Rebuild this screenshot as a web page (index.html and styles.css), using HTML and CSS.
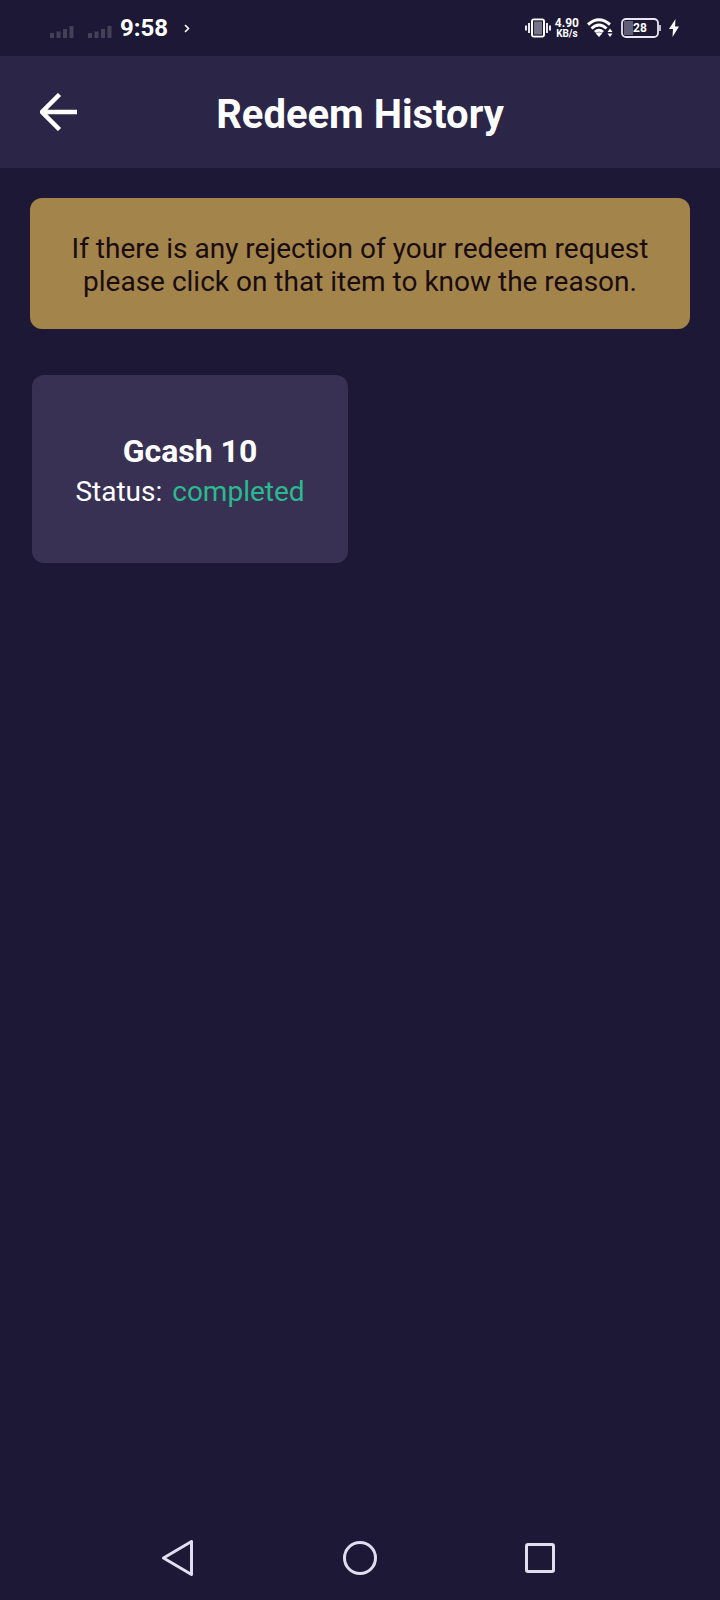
FILE: index.html
```html
<!DOCTYPE html>
<html lang="en">
<head>
<meta charset="utf-8">
<meta name="viewport" content="width=device-width, initial-scale=1">
<title>Redeem History</title>
<link rel="stylesheet" href="styles.css">
</head>
<body>
<div class="screen">
  <div class="status-bar">
    <div class="status-left">
      <svg class="signal" width="24" height="12" viewBox="0 0 24 12" aria-hidden="true"><path d="M0 7h4v5H0zM6.500 5.500h4V12h-4zM13 3h4v9h-4zM19.500 0h4v12h-4z"/></svg>
      <svg class="signal" width="24" height="12" viewBox="0 0 24 12" aria-hidden="true"><path d="M0 7h4v5H0zM6.500 5.500h4V12h-4zM13 3h4v9h-4zM19.500 0h4v12h-4z"/></svg>
      <span class="clock">9:58</span>
      <svg class="chevron" width="6" height="9" viewBox="0 0 6 9" aria-hidden="true"><path d="M1 1l3.500 3.500L1 8" fill="none" stroke="#fff" stroke-width="1.600"/></svg>
    </div>
    <div class="status-right">
      <svg width="26" height="20" viewBox="0 0 26 20" aria-hidden="true">
        <rect x="7" y="1.500" width="12" height="17" rx="2" fill="#77738a" stroke="#fff" stroke-width="2"/>
        <rect x="8.500" y="3" width="9" height="14" fill="none" stroke="#1c1835" stroke-width="1"/>
        <path d="M1 7.500v5M4 5v10M22 5v10M25 7.500v5" stroke="#fff" stroke-width="1.800"/>
      </svg>
      <span class="speed"><b class="rate">4.90</b><b class="unit">KB/s</b></span>
      <svg class="wifi" width="26" height="20" viewBox="0 0 26 20" aria-hidden="true">
        <path d="M1 6.500q11-9.500 22 0M4.500 10.500q7.500-7 15 0M8 14q4-3.600 8 0" fill="none" stroke="#fff" stroke-width="3"/>
        <path d="M8.800 15.500q3.200-2.400 6.400 0L12 19z" fill="#fff"/>
        <path d="M20.500 14l2.500-3.500 2.500 3.500zM20.500 15.500l2.500 3.500 2.500-3.500z" fill="#fff"/>
      </svg>
      <svg class="battery" width="40" height="20" viewBox="0 0 40 20" role="img" aria-label="Battery 28 percent">
        <rect x="3" y="3" width="9" height="14" fill="#625e76"/>
        <rect x="1" y="1" width="36" height="18" rx="4" fill="none" stroke="#e8e6f2" stroke-width="1.800"/>
        <path d="M39 7v6" stroke="#e8e6f2" stroke-width="1.600"/>
        <text class="charge" x="19" y="14" text-anchor="middle">28</text>
      </svg>
      <svg width="10" height="18" viewBox="0 0 10 18" aria-hidden="true"><path d="M6.500 0L0 10h4L3.500 18 10 7.500H6z" fill="#fff"/></svg>
    </div>
  </div>
  <header class="app-bar">
    <button class="back" type="button" aria-label="Back">
      <svg width="38" height="38" viewBox="0 0 38 38" aria-hidden="true"><path d="M19.500 1.500L2 19l17.500 17.500M2 19h35" fill="none" stroke="#fff" stroke-width="4.500"/></svg>
    </button>
    <h1 class="title">Redeem History</h1>
  </header>
  <main class="content">
    <p class="notice">If there is any rejection of your redeem request please click on that item to know the reason.</p>
    <div class="items">
      <button class="item" type="button">
        <span class="item-name">Gcash 10</span>
        <span class="item-status"><span>Status:</span><span class="completed">completed</span></span>
      </button>
    </div>
  </main>
  <nav class="nav-bar" aria-label="System navigation">
    <button class="nav-button" type="button" aria-label="Back"><svg width="36" height="36" viewBox="0 0 36 36" aria-hidden="true"><path d="M1.500 18L29.500 1.500v33z"/></svg></button>
    <button class="nav-button" type="button" aria-label="Home"><svg width="36" height="36" viewBox="0 0 36 36" aria-hidden="true"><circle cx="18" cy="18" r="15.500"/></svg></button>
    <button class="nav-button" type="button" aria-label="Recent apps"><svg width="36" height="36" viewBox="0 0 36 36" aria-hidden="true"><rect x="4.500" y="4.500" width="27" height="27" rx="1.500"/></svg></button>
  </nav>
</div>
</body>
</html>
```
FILE: styles.css
```css
* { box-sizing: border-box; }

body {
  margin: 0;
  background: #1c1835;
  color: #fff;
  font-family: Roboto, "Liberation Sans", sans-serif;
}

button {
  padding: 0;
  border: 0;
  background: none;
  color: inherit;
  font: inherit;
}

svg { display: block; flex: none; }

.screen {
  display: flex;
  flex-direction: column;
  min-height: 100vh;
}

.status-bar {
  display: flex;
  justify-content: space-between;
  align-items: center;
  height: 56px;
  padding: 0 41px 0 50px;
}

.status-left,
.status-right { display: flex; align-items: center; }

.status-right { gap: 8px; }

.signal {
  margin: 8px 14px 0 0;
  fill: #454059;
}

.signal + .clock { margin-left: -6px; }

.clock {
  font-size: 24px;
  font-weight: 700;
  line-height: 28px;
}

.chevron { margin-left: 16px; }

.speed {
  display: flex;
  flex-direction: column;
  align-items: center;
  margin-left: -4px;
}

.rate { font-size: 12px; line-height: 11px; }

.unit { font-size: 10px; line-height: 10px; }

.charge {
  fill: #fff;
  font-size: 12px;
  font-weight: 700;
}

.app-bar {
  display: grid;
  grid-template-columns: 78px 1fr 78px;
  align-items: center;
  height: 112px;
  background: #2b2548;
}

.back { justify-self: end; }

.title {
  grid-column: 2;
  margin: 6px 0 0;
  font-size: 40px;
  font-weight: 700;
  line-height: 48px;
  text-align: center;
}

.content { flex: 1; padding: 30px; }

.notice {
  margin: 0;
  padding: 34px 30px 31px;
  border-radius: 12px;
  background: #a3844b;
  color: #190c10;
  font-size: 28px;
  line-height: 33px;
  text-align: center;
}

.items {
  display: grid;
  grid-template-columns: 1fr 1fr;
  gap: 24px;
  margin: 46px 2px 0;
}

.item {
  display: flex;
  flex-direction: column;
  align-items: center;
  justify-content: center;
  gap: 5px;
  min-height: 188px;
  padding: 14px 12px 11px;
  border-radius: 12px;
  background: #383153;
}

.item-name {
  font-size: 32px;
  font-weight: 700;
  line-height: 38px;
}

.item-status {
  display: flex;
  gap: 10px;
  font-size: 28px;
  line-height: 34px;
}

.completed { color: #2bb990; }

.nav-bar {
  display: grid;
  grid-template-columns: repeat(3, 1fr);
  height: 84px;
  padding: 0 12.5%;
}

.nav-button {
  display: flex;
  align-items: center;
  justify-content: center;
}

.nav-button svg {
  fill: none;
  stroke: #e0def0;
  stroke-width: 3;
  stroke-linejoin: round;
}
```
